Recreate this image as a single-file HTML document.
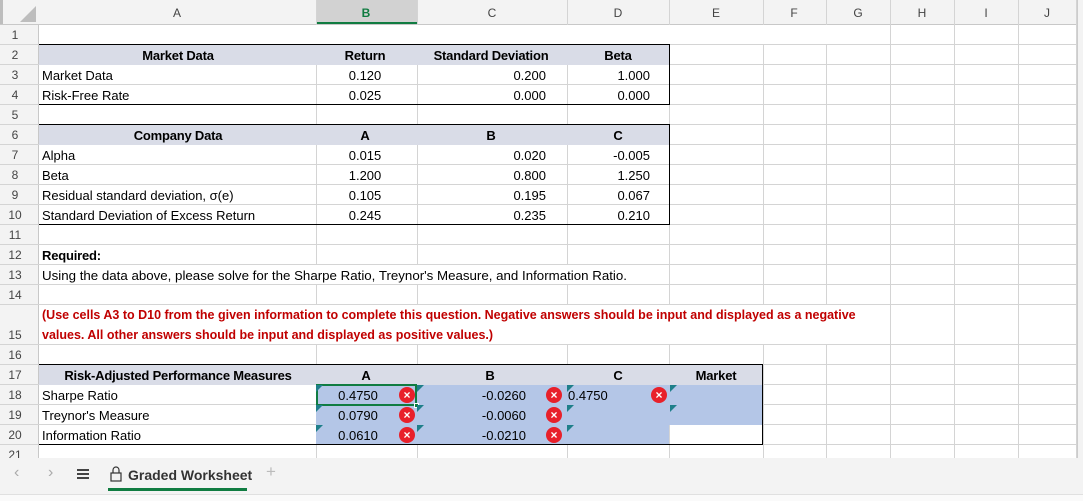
<!DOCTYPE html>
<html><head><meta charset="utf-8"><style>
*{margin:0;padding:0;box-sizing:border-box}
body{width:1083px;height:501px;overflow:hidden;background:#fff;font-family:"Liberation Sans",sans-serif;font-size:13px;color:#000;position:relative}
.a{position:absolute;white-space:nowrap}
.hl{position:absolute;height:1px;background:#d4d4d4}
.vl{position:absolute;width:1px;background:#d4d4d4}
.colh{position:absolute;top:6px;font-size:12px;color:#444;transform:translateX(-50%)}
.rn{position:absolute;left:0;width:30px;text-align:center;font-size:12px;color:#444}
.b{font-weight:bold;letter-spacing:-0.2px}
.x{position:absolute;width:16px;height:16px;border-radius:50%;background:#e8202a;color:#fff;font-size:12px;font-weight:bold;line-height:16px;text-align:center}
.t{position:absolute;width:0;height:0;border-top:7px solid #1f7f8a;border-right:7px solid transparent}
.k{position:absolute;background:#000}
.w{position:absolute;background:#fff}
</style></head><body>
<div class="a" style="left:0;top:0;width:1083px;height:25px;background:#f3f3f3"></div>
<div class="a" style="left:0;top:0;width:3px;height:458px;background:#bdbdbd"></div>
<div class="a" style="left:316px;top:0;width:101px;height:24px;background:#d2d2d2"></div>
<div class="a" style="left:316px;top:22px;width:101px;height:2px;background:#107c41"></div>
<div class="a" style="left:0;top:24px;width:1077px;height:1px;background:#c8c8c8"></div>
<div class="a" style="left:0;top:25px;width:39px;height:433px;background:#f3f3f3"></div>
<div class="a" style="left:38px;top:25px;width:1px;height:433px;background:#c8c8c8"></div>
<div class="a" style="left:1077px;top:0;width:6px;height:458px;background:#f3f3f3;border-left:1px solid #ccc"></div>
<svg class="a" style="left:20px;top:6px" width="16" height="16"><polygon points="16,0 16,16 0,16" fill="#bdbdbd"/></svg>
<div class="colh" style="left:177px">A</div>
<div class="colh" style="left:366px;color:#107c41;font-weight:bold">B</div>
<div class="colh" style="left:492px">C</div>
<div class="colh" style="left:618px">D</div>
<div class="colh" style="left:716px">E</div>
<div class="colh" style="left:794px">F</div>
<div class="colh" style="left:858px">G</div>
<div class="colh" style="left:922px">H</div>
<div class="colh" style="left:986px">I</div>
<div class="colh" style="left:1047px">J</div>
<div id="g"></div>
<!-- white covers for merged/overflow -->
<div class="w" style="left:39px;top:25px;width:851px;height:19px"></div>
<div class="w" style="left:39px;top:245px;width:60px;height:19px"></div>
<div class="w" style="left:39px;top:265px;width:592px;height:19px"></div>
<div class="w" style="left:39px;top:305px;width:815px;height:39px"></div>
<!-- fills -->
<div class="a" style="left:39px;top:45px;width:630px;height:20px;background:#d9dce7"></div>
<div class="a" style="left:39px;top:125px;width:630px;height:20px;background:#d9dce7"></div>
<div class="a" style="left:39px;top:365px;width:724px;height:20px;background:#d9dce7"></div>
<div class="a" style="left:316px;top:385px;width:447px;height:40px;background:#b4c6e7"></div>
<div class="a" style="left:316px;top:425px;width:353px;height:20px;background:#b4c6e7"></div>
<div class="k" style="left:39px;top:44px;width:631px;height:1px"></div>
<div class="k" style="left:39px;top:104px;width:631px;height:1px"></div>
<div class="k" style="left:669px;top:44px;width:1px;height:61px"></div>
<div class="k" style="left:39px;top:124px;width:631px;height:1px"></div>
<div class="k" style="left:39px;top:224px;width:631px;height:1px"></div>
<div class="k" style="left:669px;top:124px;width:1px;height:101px"></div>
<div class="k" style="left:39px;top:364px;width:724px;height:1px"></div>
<div class="k" style="left:39px;top:444px;width:724px;height:1px"></div>
<div class="k" style="left:762px;top:364px;width:1px;height:81px"></div>
<div class="a" style="left:316px;top:384px;width:101px;height:22px;border:2px solid #107c41"></div>
<div class="a" style="left:414px;top:403px;width:5px;height:5px;background:#107c41;border:1px solid #fff"></div>
<div id="txt"></div>
<div class="a" style="left:0;top:458px;width:1083px;height:36px;background:#f3f3f3"></div>
<div class="a" style="left:0;top:494px;width:1083px;height:7px;background:#fafafa;border-top:1px solid #e0e0e0"></div>
<div class="a" style="left:14px;top:464px;color:#aaa;font-size:16px">&lsaquo;</div>
<div class="a" style="left:48px;top:464px;color:#aaa;font-size:16px">&rsaquo;</div>
<div class="a" style="left:77px;top:469px;width:12px;height:1.5px;background:#444;box-shadow:0 4px 0 #444,0 8px 0 #444"></div>
<svg class="a" style="left:110px;top:466px" width="12" height="16"><path d="M3 7V4a3 3 0 0 1 6 0v3" fill="none" stroke="#333" stroke-width="1.2"/><rect x="1" y="7" width="10" height="8" fill="none" stroke="#333" stroke-width="1.2"/></svg>
<div class="a" style="left:128px;top:467px;font-size:14px;font-weight:bold;color:#333">Graded Worksheet</div>
<div class="a" style="left:108px;top:488px;width:139px;height:3px;background:#107c41"></div>
<div class="a" style="left:266px;top:462px;color:#bbb;font-size:17px">+</div>
<script>
var g='';
var rows=[];var y=25;
for(var r=1;r<=21;r++){var h=r==15?40:20;rows.push([r,y,h]);y+=h;}
[316,417,567,669,763,826,890,954,1018,1076].forEach(function(x){g+='<div class="vl" style="left:'+x+'px;top:0;height:458px"></div>';});
rows.forEach(function(o){g+='<div class="hl" style="left:0;top:'+(o[1]+o[2]-1)+'px;width:1077px"></div>';
 g+='<div class="rn" style="top:'+(o[1]+o[2]-17)+'px">'+o[0]+'</div>';});
document.getElementById('g').innerHTML=g;
function c(r){var o=rows[r-1];return o[1]+o[2]-17;}
var t='';
function T(x,r,s,st){t+='<div class="a" style="left:'+x+'px;top:'+c(r)+'px;'+(st||'')+'">'+s+'</div>';}
function C(cx,r,s,st){T(cx,r,s,'transform:translateX(-50%);'+(st||''));}
function R(rx,r,s){t+='<div class="a" style="right:'+(1083-rx)+'px;top:'+c(r)+'px">'+s+'</div>';}
C(178,2,'<b class="b">Market Data</b>');C(365,2,'<b class="b">Return</b>');C(491,2,'<b class="b">Standard Deviation</b>');C(618,2,'<b class="b">Beta</b>');
T(42,3,'Market Data');C(365,3,'0.120');R(546,3,'0.200');R(650,3,'1.000');
T(42,4,'Risk-Free Rate');C(365,4,'0.025');R(546,4,'0.000');R(650,4,'0.000');
C(178,6,'<b class="b">Company Data</b>');C(365,6,'<b class="b">A</b>');C(491,6,'<b class="b">B</b>');C(618,6,'<b class="b">C</b>');
var L=['Alpha','Beta','Residual standard deviation, σ(e)','Standard Deviation of Excess Return'];
var V=[['0.015','0.020','-0.005'],['1.200','0.800','1.250'],['0.105','0.195','0.067'],['0.245','0.235','0.210']];
for(var i=0;i<4;i++){T(42,7+i,L[i]);C(365,7+i,V[i][0]);R(546,7+i,V[i][1]);R(650,7+i,V[i][2]);}
T(42,12,'<b class="b">Required:</b>');
T(42,13,'Using the data above, please solve for the Sharpe Ratio, Treynor\'s Measure, and Information Ratio.','font-size:13.3px');
t+='<div class="a" style="left:42px;top:308px;color:#c00000;font-weight:bold;font-size:12.5px">(Use cells A3 to D10 from the given information to complete this question. Negative answers should be input and displayed as a negative</div>';
t+='<div class="a" style="left:42px;top:328px;color:#c00000;font-weight:bold;font-size:12.5px">values. All other answers should be input and displayed as positive values.)</div>';
C(178,17,'<b class="b">Risk-Adjusted Performance Measures</b>');C(366,17,'<b class="b">A</b>');C(490,17,'<b class="b">B</b>');C(618,17,'<b class="b">C</b>');C(716,17,'<b class="b">Market</b>');
T(42,18,'Sharpe Ratio');T(42,19,'Treynor\'s Measure');T(42,20,'Information Ratio');
var A=['0.4750','0.0790','0.0610'],B=['-0.0260','-0.0060','-0.0210'];
for(var i=0;i<3;i++){var r=18+i;C(358,r,A[i]);R(526,r,B[i]);
 var yy=rows[r-1][1]+2;
 t+='<div class="x" style="left:399px;top:'+yy+'px">×</div>';
 t+='<div class="x" style="left:546px;top:'+yy+'px">×</div>';
 t+='<div class="t" style="left:316px;top:'+(yy-2)+'px"></div><div class="t" style="left:417px;top:'+(yy-2)+'px"></div><div class="t" style="left:567px;top:'+(yy-2)+'px"></div>';}
T(568,18,'0.4750');
t+='<div class="x" style="left:651px;top:387px">×</div>';
t+='<div class="t" style="left:670px;top:385px"></div><div class="t" style="left:670px;top:405px"></div>';
document.getElementById('txt').innerHTML=t;
</script>
</body></html>
